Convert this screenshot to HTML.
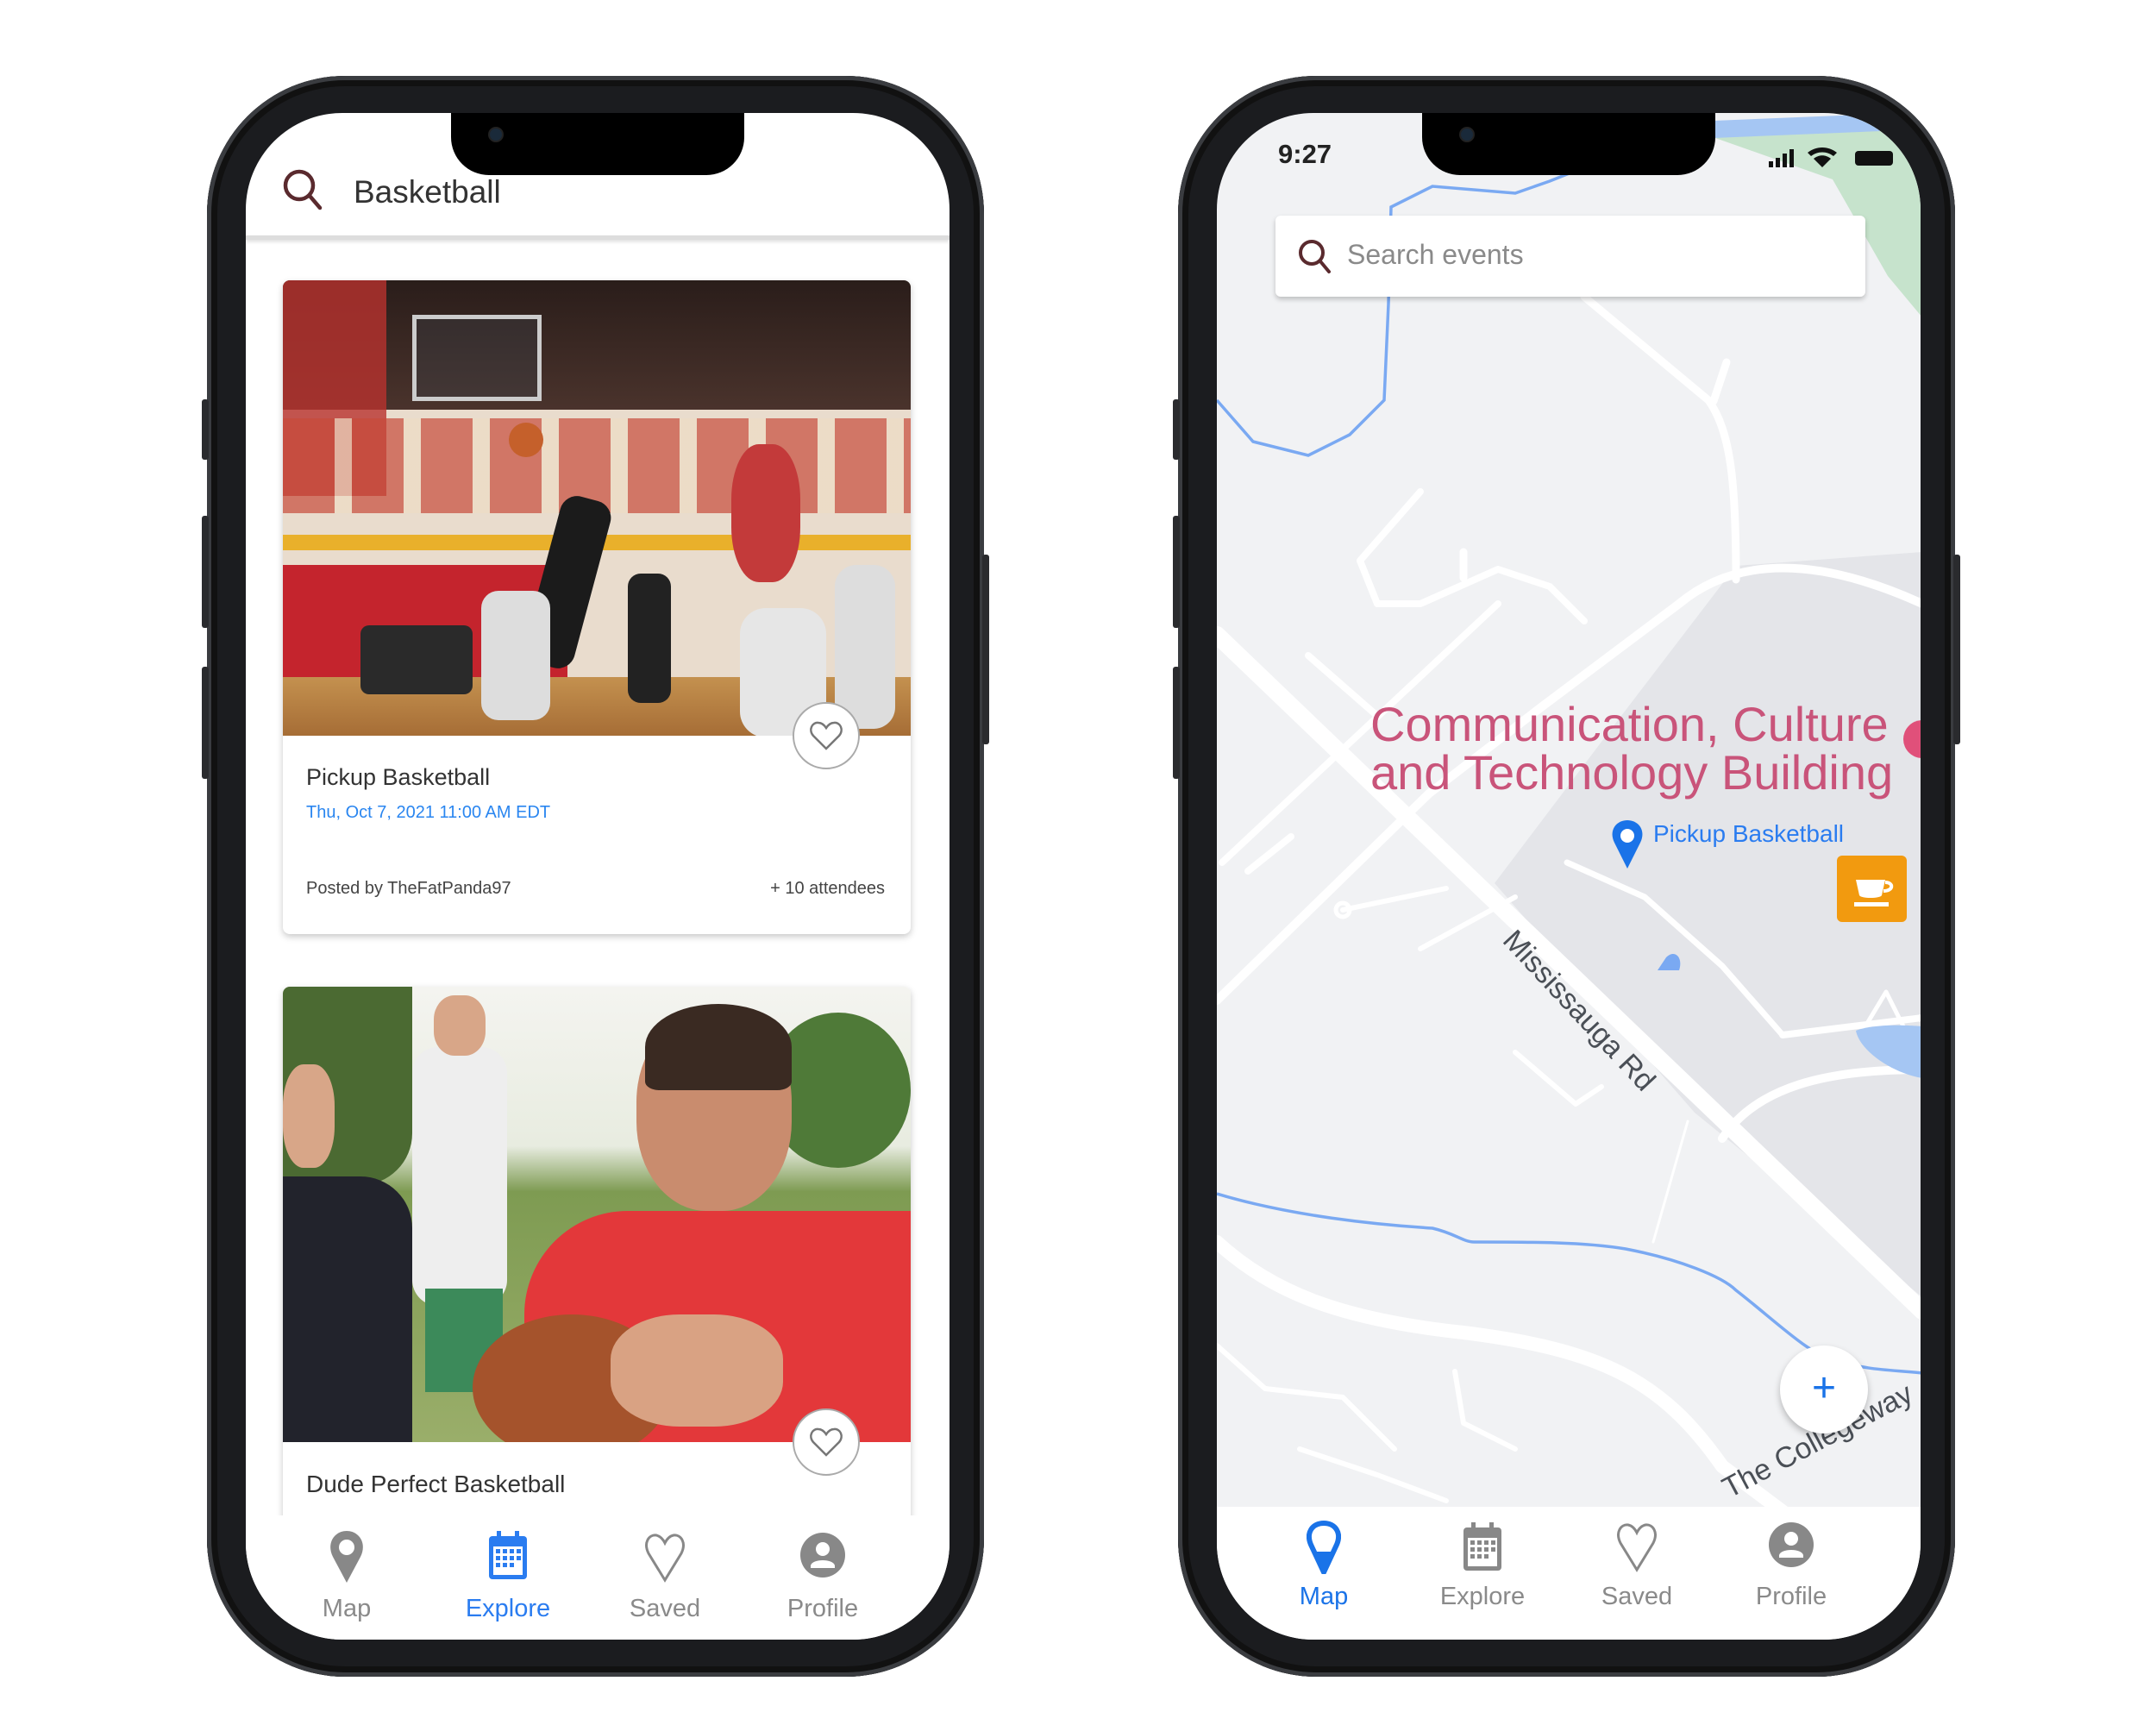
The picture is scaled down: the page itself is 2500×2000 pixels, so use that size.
<!DOCTYPE html>
<html><head><meta charset="utf-8"><style>
*{margin:0;padding:0;box-sizing:border-box}
body{width:2500px;height:2000px;background:#fff;position:relative;overflow:hidden;font-family:"Liberation Sans",Arial,sans-serif}
.phone{position:absolute;top:88px;width:901px;height:1856px;border-radius:160px;background:#1b1c1f;box-shadow:inset 0 0 0 5px #3a3c40,inset 0 0 0 12px #111}
.btn{position:absolute;width:8px;background:#2a2b2e;border-radius:3px}
.screen{position:absolute;top:43px;left:45px;width:816px;height:1770px;border-radius:112px;overflow:hidden;background:#fff}
.notch{position:absolute;top:0;left:238px;width:340px;height:72px;background:#000;border-radius:0 0 44px 44px;z-index:10}
.notch:after{content:"";position:absolute;left:45px;top:18px;width:14px;height:14px;border-radius:50%;background:#1a2a3a;box-shadow:0 0 0 2px #222}
.tabs{position:absolute;left:0;right:0;bottom:0;background:#fff;z-index:5}
.tab{position:absolute;text-align:center;font-size:29px;color:#8a8a8a;transform:translateX(-50%)}
.card{position:absolute;left:43px;width:728px;background:#fff;border-radius:8px;box-shadow:0 3px 8px rgba(0,0,0,.22)}
.heart{position:absolute;width:78px;height:78px;border-radius:50%;background:#fff;border:2px solid #aaa;display:flex;align-items:center;justify-content:center}
</style></head><body>

<!-- LEFT PHONE -->
<div class="phone" style="left:240px">
 <div class="btn" style="left:-6px;top:375px;height:70px"></div>
 <div class="btn" style="left:-6px;top:510px;height:130px"></div>
 <div class="btn" style="left:-6px;top:685px;height:130px"></div>
 <div class="btn" style="right:-6px;top:555px;height:220px"></div>
 <div class="screen">
  <div class="notch"></div>
  <svg style="position:absolute;left:40px;top:62px" width="56" height="56" viewBox="0 0 56 56"><circle cx="22" cy="22" r="16" fill="none" stroke="#5a2a2e" stroke-width="4.5"/><line x1="34" y1="34" x2="46" y2="48" stroke="#5a2a2e" stroke-width="4.5" stroke-linecap="round"/></svg>
  <div style="position:absolute;left:125px;top:71px;font-size:37px;color:#333">Basketball</div>
  <div style="position:absolute;left:0;right:0;top:142px;height:5px;background:#ddd;box-shadow:0 2px 4px rgba(0,0,0,.15)"></div>

  <div class="card" style="top:194px;height:758px">
   <div style="height:528px;border-radius:8px 8px 0 0;overflow:hidden;position:relative;background:#e9dccd">
    <div style="position:absolute;left:0;right:0;top:0;height:150px;background:linear-gradient(#2a1d1a,#4a332c)"></div>
    <div style="position:absolute;left:0;top:0;width:120px;height:250px;background:#b8322e;opacity:.8"></div>
    <div style="position:absolute;left:150px;top:40px;width:150px;height:100px;border:5px solid #ccc;background:rgba(60,70,80,.3)"></div>
    <div style="position:absolute;left:0;top:160px;width:728px;height:110px;background:repeating-linear-gradient(90deg,#c74a3a 0 60px,#eedcc4 60px 80px);opacity:.7"></div>
    <div style="position:absolute;left:0;top:295px;width:728px;height:18px;background:#e9b02b"></div>
    <div style="position:absolute;left:0;top:330px;width:330px;height:150px;background:#c4242d"></div>
    <div style="position:absolute;left:520px;top:190px;width:80px;height:160px;background:#c33a3a;border-radius:40%"></div>
    <div style="position:absolute;left:0;top:460px;width:728px;height:70px;background:linear-gradient(#c4914f,#a56c35)"></div>
    <div style="position:absolute;left:300px;top:250px;width:60px;height:200px;background:#1b1b1b;border-radius:20px;transform:rotate(15deg)"></div>
    <div style="position:absolute;left:230px;top:360px;width:80px;height:150px;background:#ddd;border-radius:20px"></div>
    <div style="position:absolute;left:530px;top:380px;width:100px;height:150px;background:#e6e6e6;border-radius:30px"></div>
    <div style="position:absolute;left:640px;top:330px;width:70px;height:190px;background:#ddd;border-radius:25px"></div>
    <div style="position:absolute;left:400px;top:340px;width:50px;height:150px;background:#222;border-radius:15px"></div>
    <div style="position:absolute;left:90px;top:400px;width:130px;height:80px;background:#2a2a2a;border-radius:10px"></div>
    <div style="position:absolute;left:262px;top:165px;width:40px;height:40px;background:#c5602b;border-radius:50%"></div>
   </div>
   <div class="heart" style="left:591px;top:489px"><svg width="40" height="36" viewBox="0 0 40 36"><path d="M20 33 L5 18 C-1 11 4 2 11 3 C15 3 18 6 20 9 C22 6 25 3 29 3 C36 2 41 11 35 18 Z" fill="none" stroke="#777" stroke-width="2.5"/></svg></div>
   <div style="position:absolute;left:27px;top:561px;font-size:27px;color:#333">Pickup Basketball</div>
   <div style="position:absolute;left:27px;top:606px;font-size:20px;color:#2a86f0">Thu, Oct 7, 2021 11:00 AM EDT</div>
   <div style="position:absolute;left:27px;top:694px;font-size:20px;color:#444">Posted by TheFatPanda97</div>
   <div style="position:absolute;right:30px;top:694px;font-size:20px;color:#444">+ 10 attendees</div>
  </div>

  <div class="card" style="top:1013px;height:700px">
   <div style="height:528px;border-radius:8px 8px 0 0;overflow:hidden;position:relative;background:linear-gradient(#f4f4f0 0,#e8ece0 35%,#7e9b52 45%,#9aae6a 100%)">
    <div style="position:absolute;left:0;top:0;width:150px;height:230px;background:#4b6a32;border-radius:0 0 60px 0"></div>
    <div style="position:absolute;left:560px;top:30px;width:168px;height:180px;background:#4f7a38;border-radius:50%"></div>
    <div style="position:absolute;left:150px;top:70px;width:110px;height:300px;background:#eeeeee;border-radius:30px"></div>
    <div style="position:absolute;left:165px;top:350px;width:90px;height:120px;background:#3c8a5a"></div>
    <div style="position:absolute;left:175px;top:10px;width:60px;height:70px;background:#d8a688;border-radius:40%"></div>
    <div style="position:absolute;left:0;top:90px;width:60px;height:120px;background:#d8a688;border-radius:40%"></div>
    <div style="position:absolute;left:0;top:220px;width:150px;height:308px;background:#22232c;border-radius:0 60px 0 0"></div>
    <div style="position:absolute;left:280px;top:260px;width:448px;height:268px;background:#e3383a;border-radius:120px 0 0 0"></div>
    <div style="position:absolute;left:410px;top:30px;width:180px;height:230px;background:#c98c6e;border-radius:45%"></div>
    <div style="position:absolute;left:420px;top:20px;width:170px;height:100px;background:#3a2a22;border-radius:50% 50% 10% 10%"></div>
    <div style="position:absolute;left:220px;top:380px;width:230px;height:170px;background:#a5532c;border-radius:50%"></div>
    <div style="position:absolute;left:380px;top:380px;width:200px;height:130px;background:#d9a283;border-radius:40%"></div>
   </div>
   <div class="heart" style="left:591px;top:489px"><svg width="40" height="36" viewBox="0 0 40 36"><path d="M20 33 L5 18 C-1 11 4 2 11 3 C15 3 18 6 20 9 C22 6 25 3 29 3 C36 2 41 11 35 18 Z" fill="none" stroke="#777" stroke-width="2.5"/></svg></div>
   <div style="position:absolute;left:27px;top:561px;font-size:28px;color:#333">Dude Perfect Basketball</div>
  </div>

  <div class="tabs" style="height:144px">
   <div class="tab" style="left:117px;top:16px"><svg width="44" height="64" viewBox="0 0 44 64"><path d="M22 62 L6 32 C-2 16 8 2 22 2 C36 2 46 16 38 32 Z" fill="#888"/><circle cx="22" cy="21" r="9" fill="#fff"/></svg></div>
   <div class="tab" style="left:117px;top:92px">Map</div>
   <div class="tab" style="left:304px;top:16px"><svg width="50" height="60" viewBox="0 0 50 60"><rect x="3" y="8" width="44" height="50" rx="4" fill="#2a7cf0"/><rect x="8" y="20" width="34" height="33" fill="#fff"/><g fill="#2a7cf0"><rect x="11" y="23" width="5" height="5"/><rect x="19" y="23" width="5" height="5"/><rect x="27" y="23" width="5" height="5"/><rect x="35" y="23" width="5" height="5"/><rect x="11" y="31" width="5" height="5"/><rect x="19" y="31" width="5" height="5"/><rect x="27" y="31" width="5" height="5"/><rect x="35" y="31" width="5" height="5"/><rect x="11" y="39" width="5" height="5"/><rect x="19" y="39" width="5" height="5"/><rect x="27" y="39" width="5" height="5"/></g><rect x="12" y="2" width="5" height="12" fill="#2a7cf0"/><rect x="33" y="2" width="5" height="12" fill="#2a7cf0"/></svg></div>
   <div class="tab" style="left:304px;top:92px;color:#2a7cf0">Explore</div>
   <div class="tab" style="left:486px;top:20px"><svg width="50" height="58" viewBox="0 0 50 58"><path d="M25 55 L6 24 C0 12 6 2 15 3 C20 4 23 8 25 12 C27 8 30 4 35 3 C44 2 50 12 44 24 Z" fill="none" stroke="#888" stroke-width="3"/></svg></div>
   <div class="tab" style="left:486px;top:92px">Saved</div>
   <div class="tab" style="left:669px;top:18px"><svg width="54" height="56" viewBox="0 0 54 56"><circle cx="27" cy="28" r="26" fill="#888"/><circle cx="27" cy="21" r="8" fill="#fff"/><path d="M13 40 C15 32 39 32 41 40 L41 43 L13 43 Z" fill="#fff"/></svg></div>
   <div class="tab" style="left:669px;top:92px">Profile</div>
  </div>
 </div>
</div>

<!-- RIGHT PHONE -->
<div class="phone" style="left:1366px">
 <div class="btn" style="left:-6px;top:375px;height:70px"></div>
 <div class="btn" style="left:-6px;top:510px;height:130px"></div>
 <div class="btn" style="left:-6px;top:685px;height:130px"></div>
 <div class="btn" style="right:-6px;top:555px;height:220px"></div>
 <div class="screen" style="background:#f1f2f4">
  <div class="notch" style="left:238px"></div>
  <svg style="position:absolute;left:0;top:0" width="818" height="1770" viewBox="1414 131 818 1770">
   <polygon points="1736,1024 1860,860 2016,656 2232,640 2232,1504 1968,1290" fill="#e4e5e9"/>
   <polygon points="1992,160 2232,131 2232,368 2192,320 2128,208" fill="#c6e3cc"/>
   <path d="M1990,150 L2232,140" stroke="#a5c6f3" stroke-width="20" fill="none"/>
   <g fill="none" stroke="#fff" stroke-linecap="round" stroke-linejoin="round">
    <path d="M1414,736 L2232,1520" stroke-width="20"/>
    <path d="M1414,1440 C1480,1500 1560,1530 1700,1545 C1860,1565 1930,1600 2000,1700 L2080,1760" stroke-width="16"/>
    <path d="M1840,344 L1984,464 C2010,500 2016,560 2016,672" stroke-width="9"/>
    <path d="M1990,465 L2005,420" stroke-width="9"/>
    <path d="M1420,1000 L1740,700" stroke-width="8"/>
    <path d="M1650,570 L1580,650 L1600,700 L1650,700 L1740,660 L1800,680 L1840,720" stroke-width="8"/>
    <path d="M1700,670 L1700,640" stroke-width="9"/>
    <path d="M1600,830 L1520,760" stroke-width="8"/>
    <path d="M1450,1010 L1500,970" stroke-width="8"/>
    <path d="M1414,1160 L1660,920 L1790,820 L1950,700 C2010,650 2100,640 2232,700" stroke-width="10"/>
    <path d="M1560,1055 L1680,1030" stroke-width="6"/>
    <path d="M1650,1100 L1760,1040" stroke-width="6"/>
    <path d="M1820,1000 L1910,1040 L2000,1120 L2070,1200" stroke-width="7"/>
    <path d="M2070,1200 L2232,1180" stroke-width="8"/>
    <path d="M2000,1320 C2040,1260 2120,1240 2232,1240" stroke-width="10"/>
    <path d="M1760,1220 L1830,1280 L1860,1260" stroke-width="6"/>
    <path d="M1920,1440 L1960,1300" stroke-width="3"/>
    <path d="M1510,1680 L1600,1710 L1680,1740" stroke-width="6"/>
    <path d="M1414,1560 L1470,1610 L1560,1620 L1620,1680" stroke-width="6"/>
    <path d="M1690,1590 L1700,1650 L1760,1680" stroke-width="6"/>
    <path d="M2160,1200 L2190,1150 L2210,1190" stroke-width="5"/>
   </g>
   <circle cx="1560" cy="1055" r="8" fill="none" stroke="#fff" stroke-width="5"/>
   <path d="M1414,464 L1456,512 L1520,528 L1568,504 L1608,464 L1613,352 L1616,240 L1664,216 L1760,224 L1800,210 L1850,190" fill="none" stroke="#7aa9f2" stroke-width="3.5"/>
   <path d="M1414,1384 C1500,1410 1600,1420 1664,1424 C1690,1430 1700,1440 1712,1440 C1780,1440 1840,1440 1888,1448 C1950,1460 2000,1480 2016,1496 C2060,1530 2100,1570 2128,1576 C2170,1590 2200,1588 2232,1592" fill="none" stroke="#7aa9f2" stroke-width="3.5"/>
   <path d="M2155,1195 C2180,1185 2232,1190 2232,1190 L2232,1250 C2200,1245 2160,1220 2155,1195Z" fill="#a5c6f3"/>
   <path d="M1935,1110 C1945,1100 1955,1110 1950,1125 L1925,1125Z" fill="#7aa9f2"/>
   <circle cx="2232" cy="857" r="22" fill="#e0507a"/>
  </svg>
  <div style="position:absolute;left:71px;top:30px;font-size:31px;font-weight:bold;color:#222">9:27</div>
  <svg style="position:absolute;left:640px;top:36px" width="150" height="30" viewBox="0 0 150 30"><g fill="#111"><rect x="0" y="20" width="5" height="7"/><rect x="8" y="16" width="5" height="11"/><rect x="16" y="11" width="5" height="16"/><rect x="24" y="6" width="5" height="21"/><path d="M45 10 C55 2 69 2 79 10 L75 14 C67 8 57 8 49 14Z"/><path d="M52 17 C58 12 66 12 72 17 L62 27Z"/><rect x="100" y="8" width="44" height="17" rx="4"/></g></svg>
  <div style="position:absolute;left:68px;top:119px;width:684px;height:94px;background:#fff;border-radius:6px;box-shadow:0 3px 6px rgba(0,0,0,.22)"></div>
  <svg style="position:absolute;left:92px;top:144px" width="46" height="46" viewBox="0 0 46 46"><circle cx="18" cy="18" r="13" fill="none" stroke="#5a2a2e" stroke-width="4"/><line x1="28" y1="28" x2="38" y2="40" stroke="#5a2a2e" stroke-width="4" stroke-linecap="round"/></svg>
  <div style="position:absolute;left:151px;top:146px;font-size:32px;color:#8a8a8a">Search events</div>
  <div style="position:absolute;left:178px;top:681px;font-size:56px;color:#c9547a;line-height:56px;text-align:right;width:600px;white-space:nowrap">Communication, Culture<br>and Technology Building</div>
  <svg style="position:absolute;left:456px;top:818px" width="40" height="60" viewBox="0 0 40 60"><path d="M20 58 L5 28 C-2 14 7 2 20 2 C33 2 42 14 35 28 Z" fill="#1a73e8"/><circle cx="20" cy="20" r="8" fill="#fff"/></svg>
  <div style="position:absolute;left:506px;top:820px;font-size:28px;color:#2a7cf0">Pickup Basketball</div>
  <div style="position:absolute;left:719px;top:861px;width:81px;height:77px;background:#f29a0f;border-radius:6px"><svg width="81" height="77" viewBox="0 0 81 77"><path d="M22 28 L56 28 L52 46 C50 50 28 50 26 46Z" fill="#fff"/><path d="M56 31 C66 31 66 41 54 41" fill="none" stroke="#fff" stroke-width="4"/><rect x="20" y="54" width="40" height="5" fill="#fff"/></svg></div>
  <div style="position:absolute;left:352px;top:940px;font-size:34px;color:#4a4f56;transform:rotate(47deg);transform-origin:left top;white-space:nowrap">Mississauga Rd</div>
  <div style="position:absolute;left:580px;top:1580px;font-size:34px;color:#4a4f56;transform:rotate(-28deg);transform-origin:left top;white-space:nowrap">The Collegeway</div>
  <div style="position:absolute;left:653px;top:1429px;width:102px;height:102px;border-radius:50%;background:#fff;box-shadow:0 4px 8px rgba(0,0,0,.25);text-align:center;line-height:100px;font-size:48px;color:#1a73e8">+</div>
  <div class="tabs" style="height:154px">
   <div class="tab" style="left:124px;top:16px"><svg width="40" height="62" viewBox="0 0 40 62"><path d="M20 60 L6 30 C-2 14 7 3 20 3 C33 3 42 14 34 30 Z" fill="none" stroke="#1a73e8" stroke-width="6" stroke-linejoin="round"/><path d="M20 60 L9 36 L31 36Z" fill="#1a73e8"/></svg></div>
   <div class="tab" style="left:124px;top:88px;color:#1a73e8">Map</div>
   <div class="tab" style="left:308px;top:16px"><svg width="50" height="60" viewBox="0 0 50 60"><rect x="3" y="8" width="44" height="50" rx="4" fill="#888"/><rect x="8" y="20" width="34" height="33" fill="#fff"/><g fill="#888"><rect x="11" y="23" width="5" height="5"/><rect x="19" y="23" width="5" height="5"/><rect x="27" y="23" width="5" height="5"/><rect x="35" y="23" width="5" height="5"/><rect x="11" y="31" width="5" height="5"/><rect x="19" y="31" width="5" height="5"/><rect x="27" y="31" width="5" height="5"/><rect x="35" y="31" width="5" height="5"/><rect x="11" y="39" width="5" height="5"/><rect x="19" y="39" width="5" height="5"/><rect x="27" y="39" width="5" height="5"/></g><rect x="12" y="2" width="5" height="12" fill="#888"/><rect x="33" y="2" width="5" height="12" fill="#888"/></svg></div>
   <div class="tab" style="left:308px;top:88px">Explore</div>
   <div class="tab" style="left:487px;top:18px"><svg width="50" height="58" viewBox="0 0 50 58"><path d="M25 55 L6 24 C0 12 6 2 15 3 C20 4 23 8 25 12 C27 8 30 4 35 3 C44 2 50 12 44 24 Z" fill="none" stroke="#888" stroke-width="3"/></svg></div>
   <div class="tab" style="left:487px;top:88px">Saved</div>
   <div class="tab" style="left:666px;top:16px"><svg width="54" height="56" viewBox="0 0 54 56"><circle cx="27" cy="28" r="26" fill="#888"/><circle cx="27" cy="21" r="8" fill="#fff"/><path d="M13 40 C15 32 39 32 41 40 L41 43 L13 43 Z" fill="#fff"/></svg></div>
   <div class="tab" style="left:666px;top:88px">Profile</div>
  </div>
 </div>
</div>
</body></html>
